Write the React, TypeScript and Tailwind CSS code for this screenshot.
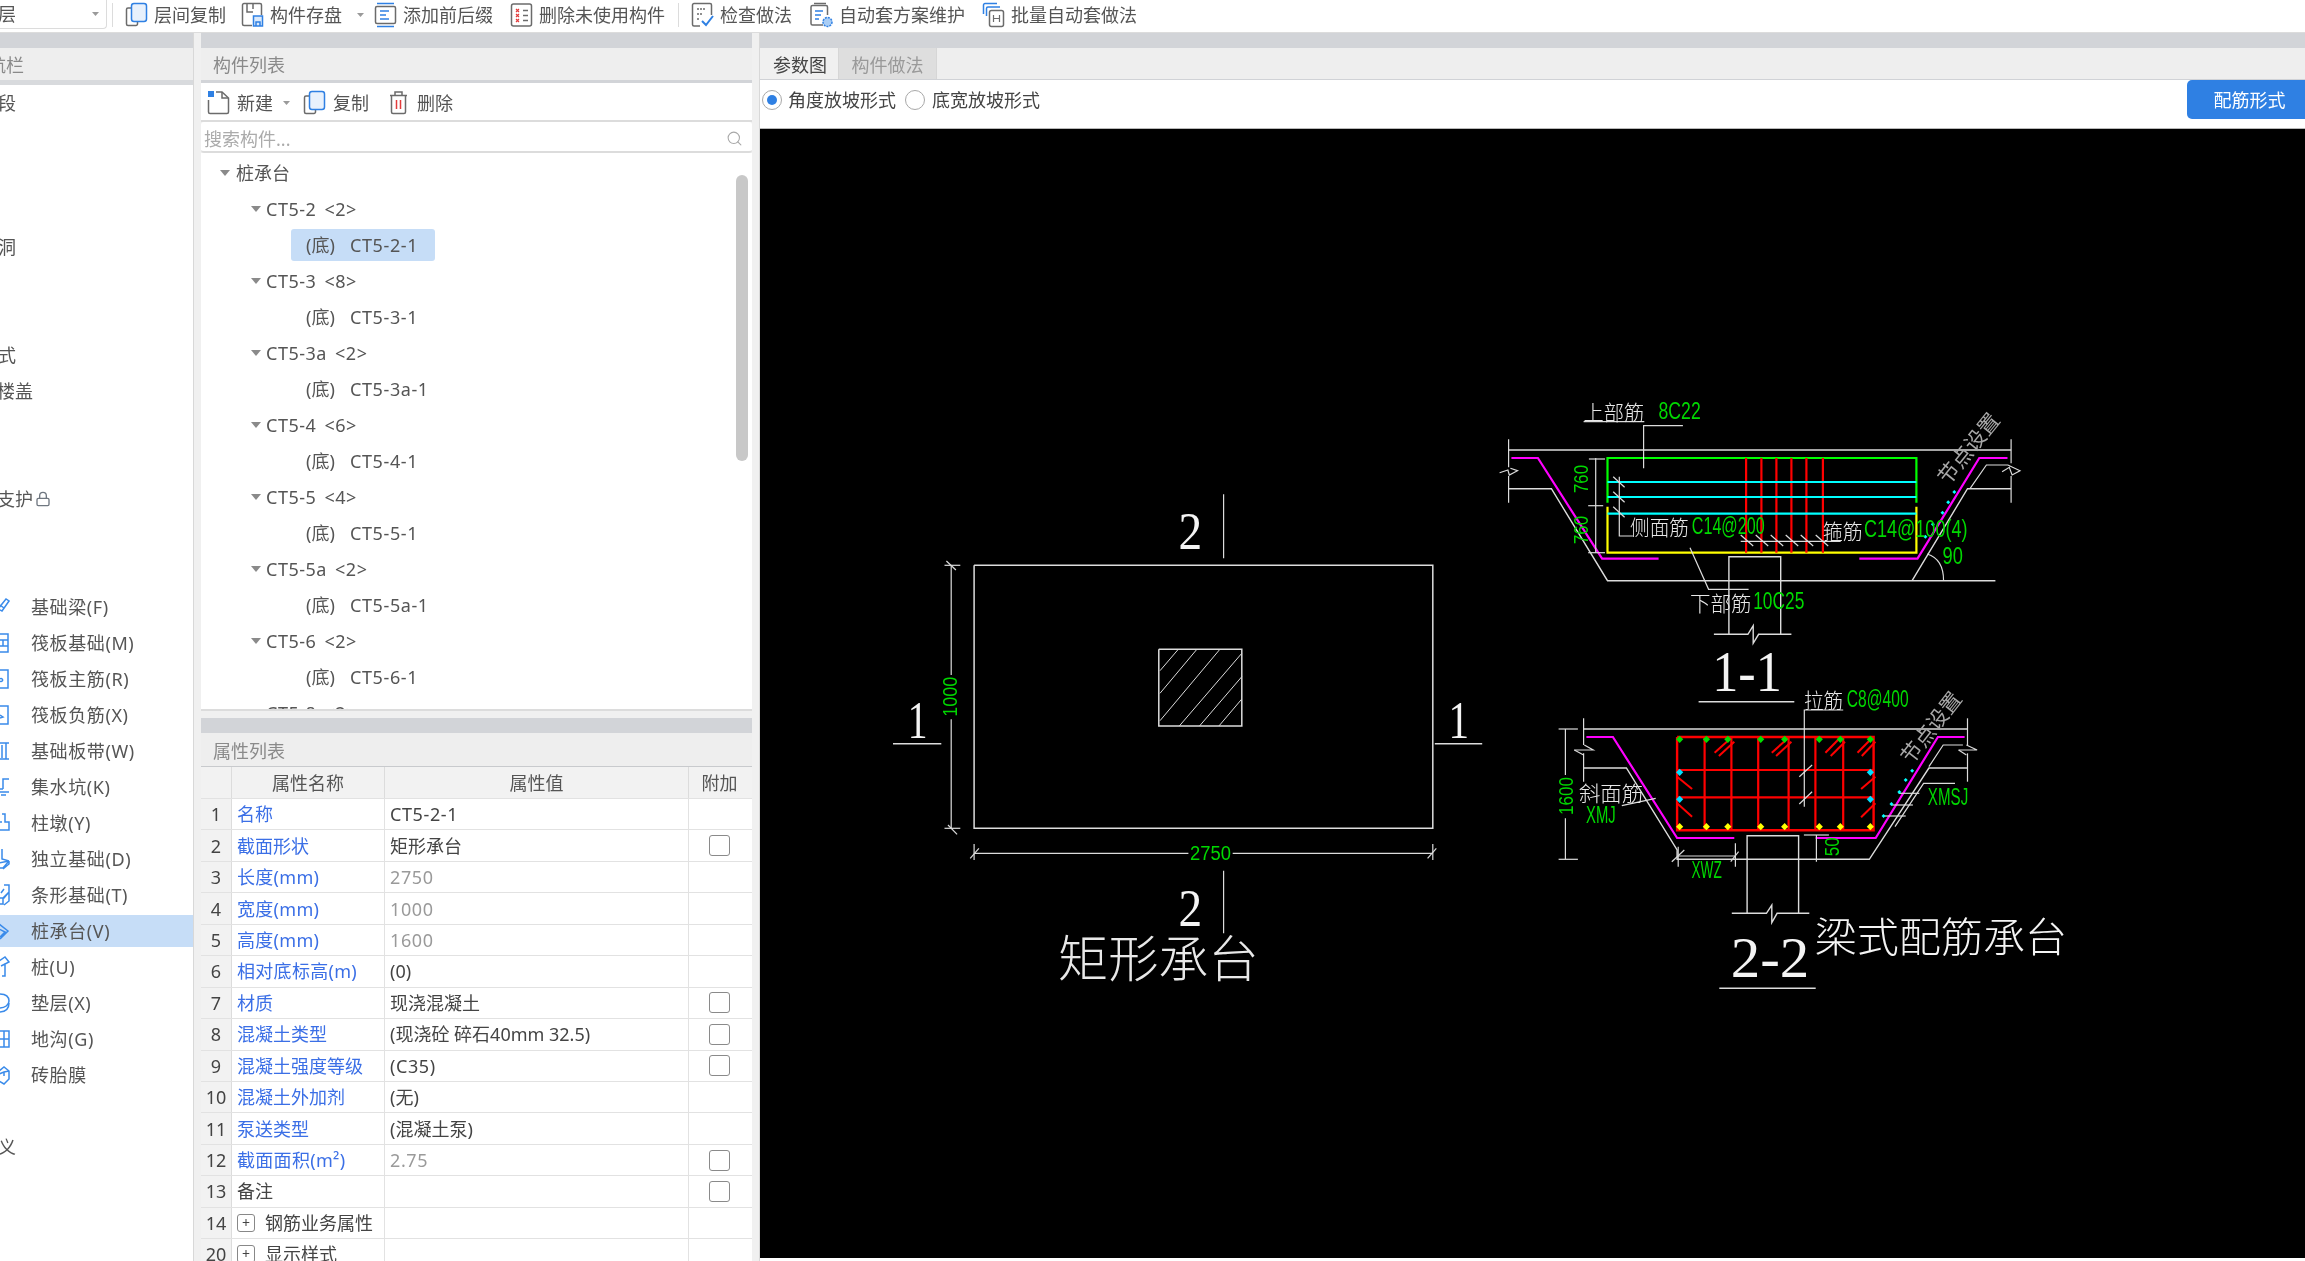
import React from "react";
import { Lock, Search } from "lucide-react";

const BLUE = "#2f80e3";
const GRAY = "#6b6b6b";

type M = (x: number, y: number) => number[];
const z5: M = (x, y) => [1480 + x / 2.8, 380 + y / 3];
const z6: M = (x, y) => [1520 + x / 2.8, 670 + y / 3];
const z7: M = (x, y) => [880 + x / 2.529, 480 + y / 3];

function P({ m, d, c = "#dcdcdc", w = 1.2 }: { m: M; d: number[]; c?: string; w?: number }) {
  const pts: string[] = [];
  for (let i = 0; i < d.length; i += 2) {
    const [x, y] = m(d[i], d[i + 1]);
    pts.push(x.toFixed(1) + "," + y.toFixed(1));
  }
  return <polyline points={pts.join(" ")} fill="none" stroke={c} strokeWidth={w} />;
}

const CADGREEN = "#00d800";
function Lbl({ m, x, x2, y, t, c = CADGREEN, s = 23, f = "'Liberation Sans'", fw = 400 }: { m: M; x: number; x2: number; y: number; t: string; c?: string; s?: number; f?: string; fw?: number }) {
  const [a, b] = m(x, y);
  const [a2] = m(x2, y);
  return (
    <text x={a} y={b} fontSize={s} fill={c} fontFamily={f} fontWeight={fw} textLength={a2 - a} lengthAdjust="spacingAndGlyphs">
      {t}
    </text>
  );
}
function Rot({ m, x, y, t, len, r = -90, c = CADGREEN, s = 21, f = "'Liberation Sans'" }: { m: M; x: number; y: number; t: string; len: number; r?: number; c?: string; s?: number; f?: string }) {
  const [a, b] = m(x, y);
  return (
    <text transform={`translate(${a} ${b}) rotate(${r})`} textAnchor="middle" dominantBaseline="central" fontSize={s} fill={c} fontFamily={f} textLength={len} lengthAdjust="spacingAndGlyphs">
      {t}
    </text>
  );
}
function Dia({ m, x, y, c, r = 3.6 }: { m: M; x: number; y: number; c: string; r?: number }) {
  const [a, b] = m(x, y);
  return <polygon points={`${a},${b - r} ${a + r},${b} ${a},${b + r} ${a - r},${b}`} fill={c} />;
}
const CJK = "'Noto Sans CJK SC'";
const SERIF = "'Liberation Serif'";

function Plan() {
  const hatch = [
    [708, 572, 753, 510],
    [708, 640, 800, 510],
    [708, 722, 858, 510],
    [757, 738, 915, 520],
    [808, 738, 915, 590],
    [857, 738, 915, 657],
  ];
  return (
    <g>
      <P m={z7} d={[238, 256, 1398, 256, 1398, 1045, 238, 1045, 238, 256]} w={1.5} />
      <P m={z7} d={[705, 508, 915, 508, 915, 738, 705, 738, 705, 508]} w={1.5} />
      {hatch.map((h, i) => (
        <P key={i} m={z7} d={h} w={1} />
      ))}
      <P m={z7} d={[869, 43, 869, 235]} />
      <P m={z7} d={[869, 1172, 869, 1360]} />
      <P m={z7} d={[33, 791, 155, 791]} w={1.5} />
      <P m={z7} d={[1403, 791, 1523, 791]} w={1.5} />
      <P m={z7} d={[180, 256, 180, 585]} />
      <P m={z7} d={[180, 718, 180, 1045]} />
      <P m={z7} d={[163, 256, 203, 256]} />
      <P m={z7} d={[163, 1045, 203, 1045]} />
      <P m={z7} d={[168, 243, 192, 270]} />
      <P m={z7} d={[172, 1035, 195, 1063]} />
      <P m={z7} d={[238, 1120, 780, 1120]} />
      <P m={z7} d={[892, 1120, 1398, 1120]} />
      <P m={z7} d={[238, 1092, 238, 1140]} />
      <P m={z7} d={[1398, 1092, 1398, 1140]} />
      <P m={z7} d={[228, 1135, 250, 1105]} />
      <P m={z7} d={[1385, 1135, 1407, 1105]} />
      <Rot m={z7} x={178} y={650} t="1000" len={40} s={20} />
      <Rot m={z7} x={836} y={1120} t="2750" len={41} r={0} s={20} />
      <Lbl m={z7} x={755} x2={815} y={207} t="2" c="#f4f4f4" s={52} f={SERIF} />
      <Lbl m={z7} x={755} x2={815} y={1337} t="2" c="#f4f4f4" s={52} f={SERIF} />
      <Lbl m={z7} x={70} x2={120} y={775} t="1" c="#f4f4f4" s={52} f={SERIF} />
      <Lbl m={z7} x={1438} x2={1490} y={775} t="1" c="#f4f4f4" s={52} f={SERIF} />
      <Lbl m={z7} x={450} x2={958} y={1490} t="矩形承台" c="#e8e8e8" s={50} f={CJK} fw={300} />
    </g>
  );
}

function Sec1() {
  const reds = [745, 788, 830, 872, 914, 960];
  return (
    <g>
      <P m={z5} d={[80, 210, 1487, 210]} w={1.4} />
      <P m={z5} d={[80, 178, 80, 262]} />
      <P m={z5} d={[80, 288, 80, 368]} />
      <P m={z5} d={[55, 278, 78, 270, 82, 285, 105, 272, 85, 265]} />
      <P m={z5} d={[1487, 178, 1487, 250]} />
      <P m={z5} d={[1487, 288, 1487, 368]} />
      <P m={z5} d={[1462, 275, 1482, 262, 1490, 285, 1512, 272, 1478, 255, 1418, 255, 1372, 326]} />
      <P m={z5} d={[80, 326, 200, 326, 357, 602, 1443, 602]} w={1.4} />
      <P m={z5} d={[1210, 602, 1365, 326, 1487, 326]} w={1.4} />
      <P m={z5} d={[88, 234, 162, 234, 342, 536, 500, 536]} c="#ff00ff" w={2.2} />
      <P m={z5} d={[1062, 536, 1225, 536, 1398, 234, 1477, 234]} c="#ff00ff" w={2.2} />
      <P m={z5} d={[357, 368, 357, 234, 1222, 234, 1222, 368]} c="#00ff00" w={2.2} />
      <P m={z5} d={[357, 380, 357, 518, 1222, 518, 1222, 380]} c="#ffff00" w={2.2} />
      {reds.map((x) => (
        <P key={x} m={z5} d={[x, 234, x, 518]} c="#ff0000" w={2.2} />
      ))}
      {[306, 351, 401].map((y) => (
        <P key={y} m={z5} d={[357, y, 1222, y]} c="#00ffff" w={2.2} />
      ))}
      <P m={z5} d={[324, 234, 324, 518]} />
      <P m={z5} d={[305, 237, 350, 237]} />
      <P m={z5} d={[303, 377, 345, 377]} />
      <P m={z5} d={[303, 518, 350, 518]} />
      <P m={z5} d={[290, 125, 460, 125]} />
      <P m={z5} d={[568, 137, 458, 137, 458, 265]} />
      <P m={z5} d={[390, 290, 390, 468, 428, 468]} />
      {[290, 335, 380].map((y) => (
        <P key={y} m={z5} d={[373, y, 405, y + 32]} />
      ))}
      <P m={z5} d={[730, 484, 1010, 484]} />
      {[730, 772, 814, 856, 898, 940].map((x) => (
        <P key={x} m={z5} d={[x, 465, x + 35, 498]} />
      ))}
      <P m={z5} d={[588, 503, 640, 628, 752, 628]} />
      <P m={z5} d={[697, 763, 697, 530, 842, 530, 842, 763]} w={1.4} />
      <P m={z5} d={[655, 763, 750, 763, 765, 737, 765, 790, 780, 763, 872, 763]} w={1.4} />
      {(() => {
        const [a, b] = z5(1252, 522);
        const [c, d] = z5(1298, 602);
        return <path d={`M${a} ${b} Q${c} ${b + 5} ${c} ${d}`} fill="none" stroke="#dcdcdc" strokeWidth={1.2} />;
      })()}
      {[
        [1328, 336],
        [1311, 367],
        [1295, 398],
        [1268, 433],
        [1247, 470],
      ].map(([x, y]) => (
        <Dia key={x} m={z5} x={x} y={y} c="#00ffff" r={2} />
      ))}
      <Lbl m={z5} x={290} x2={460} y={120} t="上部筋" c="#e8e8e8" s={21} f={CJK} fw={300} />
      <Lbl m={z5} x={500} x2={618} y={118} t="8C22" />
      <Lbl m={z5} x={420} x2={585} y={466} t="侧面筋" c="#e8e8e8" s={21} f={CJK} fw={300} />
      <Lbl m={z5} x={593} x2={797} y={463} t="C14@200" />
      <Lbl m={z5} x={960} x2={1072} y={476} t="箍筋" c="#e8e8e8" s={21} f={CJK} fw={300} />
      <Lbl m={z5} x={1075} x2={1365} y={472} t="C14@100(4)" />
      <Lbl m={z5} x={588} x2={760} y={692} t="下部筋" c="#e8e8e8" s={21} f={CJK} fw={300} />
      <Lbl m={z5} x={765} x2={908} y={688} t="10C25" />
      <Lbl m={z5} x={1295} x2={1352} y={551} t="90" />
      <Rot m={z5} x={280} y={297} t="760" len={28} />
      <Rot m={z5} x={280} y={450} t="760" len={28} />
      <Rot m={z5} x={1365} y={203} t="节点设置" len={84} r={-51} c="#a8a8a8" s={21} f={CJK} />
      <Lbl m={z5} x={650} x2={845} y={932} t="1-1" c="#f4f4f4" s={56} f={SERIF} />
      <P m={z6} d={[500, 95, 768, 95]} w={1.5} />
    </g>
  );
}

function Sec2() {
  const tx = [447, 522, 582, 674, 741, 838, 897, 981];
  const hooks = [
    [545, 248, 590, 205],
    [557, 258, 600, 215],
    [705, 248, 750, 205],
    [717, 258, 760, 215],
    [855, 248, 895, 205],
    [870, 258, 910, 215],
    [945, 248, 985, 205],
    [957, 258, 995, 215],
    [440, 320, 482, 357],
    [440, 400, 482, 440],
    [995, 320, 955, 357],
    [995, 400, 955, 442],
  ];
  return (
    <g>
      <P m={z6} d={[178, 177, 1253, 177]} w={1.4} />
      <P m={z6} d={[178, 145, 178, 225]} />
      <P m={z6} d={[178, 250, 178, 335]} />
      <P m={z6} d={[1253, 145, 1253, 225]} />
      <P m={z6} d={[1253, 250, 1253, 335]} />
      <P m={z6} d={[152, 240, 205, 240, 180, 225]} />
      <P m={z6} d={[152, 240, 178, 255]} />
      <P m={z6} d={[1228, 240, 1280, 240, 1250, 225]} />
      <P m={z6} d={[1228, 240, 1250, 255]} />
      <P m={z6} d={[178, 294, 298, 294, 440, 540, 440, 568, 978, 568, 1145, 294, 1253, 294]} w={1.4} />
      <P m={z6} d={[1240, 225, 1185, 225, 1145, 290]} />
      <P m={z6} d={[1218, 340, 1130, 340, 1050, 470]} />
      <P m={z6} d={[186, 201, 260, 201, 440, 504, 600, 504]} c="#ff00ff" w={2.2} />
      <P m={z6} d={[828, 504, 996, 504, 1170, 201, 1245, 201]} c="#ff00ff" w={2.2} />
      <P m={z6} d={[440, 201, 990, 201, 990, 481, 440, 481, 440, 201]} c="#ff0000" w={2.4} />
      {[517, 592, 667, 752, 827, 905].map((x) => (
        <P key={x} m={z6} d={[x, 201, x, 481]} c="#ff0000" w={2.2} />
      ))}
      {[300, 382].map((y) => (
        <P key={y} m={z6} d={[440, y, 990, y]} c="#ff0000" w={2.2} />
      ))}
      {hooks.map((h, i) => (
        <P key={i} m={z6} d={h} c="#ff0000" w={2} />
      ))}
      {tx.map((x) => (
        <Dia key={x} m={z6} x={x} y={208} c="#00e000" />
      ))}
      {tx.map((x) => (
        <Dia key={x} m={z6} x={x} y={470} c="#ffff00" />
      ))}
      <Dia m={z6} x={447} y={307} c="#00e0ff" />
      <Dia m={z6} x={981} y={307} c="#00e0ff" />
      <Dia m={z6} x={447} y={388} c="#00e0ff" />
      <Dia m={z6} x={981} y={388} c="#00e0ff" />
      <P m={z6} d={[905, 120, 796, 120, 796, 410]} />
      <P m={z6} d={[782, 320, 818, 285]} />
      <P m={z6} d={[782, 402, 818, 365]} />
      <P m={z6} d={[285, 407, 380, 385]} />
      <P m={z6} d={[127, 177, 127, 315]} />
      <P m={z6} d={[127, 445, 127, 568]} />
      <P m={z6} d={[108, 177, 162, 177]} />
      <P m={z6} d={[108, 568, 162, 568]} />
      <P m={z6} d={[443, 530, 443, 590]} />
      <P m={z6} d={[603, 520, 603, 590]} />
      <P m={z6} d={[443, 558, 603, 558]} />
      <P m={z6} d={[425, 575, 460, 540]} />
      <P m={z6} d={[590, 575, 612, 545]} />
      <P m={z6} d={[830, 495, 830, 575]} />
      <P m={z6} d={[795, 495, 865, 495]} />
      <P m={z6} d={[636, 730, 636, 497, 780, 497, 780, 730]} w={1.4} />
      <P m={z6} d={[593, 730, 690, 730, 705, 705, 705, 758, 720, 730, 810, 730]} w={1.4} />
      {[
        [1060, 370, 1118, 370],
        [1040, 405, 1100, 405],
        [1020, 438, 1080, 438],
      ].map((h, i) => (
        <P key={i} m={z6} d={h} />
      ))}
      {[
        [1098, 302],
        [1080, 330],
        [1062, 366],
        [1040, 402],
        [1018, 438],
      ].map(([x, y]) => (
        <Dia key={x} m={z6} x={x} y={y} c="#00ffff" r={2} />
      ))}
      <Lbl m={z6} x={795} x2={905} y={114} t="拉筋" c="#e8e8e8" s={21} f={CJK} fw={300} />
      <Lbl m={z6} x={915} x2={1088} y={112} t="C8@400" />
      <Lbl m={z6} x={165} x2={345} y={394} t="斜面筋" c="#e8e8e8" s={21} f={CJK} fw={300} />
      <Lbl m={z6} x={185} x2={268} y={458} t="XMJ" />
      <Lbl m={z6} x={1142} x2={1255} y={405} t="XMSJ" />
      <Lbl m={z6} x={480} x2={565} y={625} t="XWZ" />
      <Rot m={z6} x={127} y={378} t="1600" len={38} />
      <Rot m={z6} x={873} y={530} t="50" len={19} />
      <Rot m={z6} x={1148} y={170} t="节点设置" len={84} r={-52} c="#a8a8a8" s={21} f={CJK} />
      <Lbl m={z6} x={590} x2={810} y={922} t="2-2" c="#f4f4f4" s={56} f={SERIF} />
      <P m={z6} d={[558, 955, 828, 955]} w={1.5} />
      <Lbl m={z6} x={825} x2={1532} y={847} t="梁式配筋承台" c="#f4f4f4" s={41} f={CJK} fw={300} />
    </g>
  );
}

/* toolbar icons */
const Ico = ({ children, w = 23 }: { children: React.ReactNode; w?: number }) => (
  <svg width={w} height={26} viewBox="0 0 23 26" fill="none" strokeWidth={1.5} className="shrink-0">
    {children}
  </svg>
);
const CopyIco = () => (
  <Ico>
    <path d="M6 6H3a1.5 1.5 0 0 0-1.5 1.5V22A1.5 1.5 0 0 0 3 23.5H11a1.5 1.5 0 0 0 1.5-1.5V20" stroke={GRAY} />
    <rect x="6.5" y="1.5" width="15" height="18" rx="2.5" stroke={BLUE} fill="#e8f1fc" />
  </Ico>
);
const SaveIco = () => (
  <Ico>
    <path d="M11 23.5H3A1.5 1.5 0 0 1 1.5 22V3A1.5 1.5 0 0 1 3 1.5H19A1.5 1.5 0 0 1 20.5 3V13" stroke={GRAY} />
    <path d="M6 2V10H12M12 2V7" stroke={GRAY} />
    <rect x="12.5" y="14" width="9" height="10" stroke={BLUE} fill="#dceafb" />
    <path d="M15 24V20H19V24" stroke={BLUE} />
  </Ico>
);
const AffixIco = () => (
  <Ico>
    <path d="M3 1.5H20M3 24.5H20" stroke={BLUE} />
    <rect x="1.5" y="4.5" width="20" height="17" rx="1.5" stroke={GRAY} />
    <path d="M6 9H15M6 13H12M6 17H15" stroke={BLUE} />
  </Ico>
);
const DelUnusedIco = () => (
  <Ico>
    <rect x="1.5" y="2" width="20" height="22" rx="2" stroke={GRAY} />
    <path d="M6 7L9 10M9 7L6 10M6 12L9 15M9 12L6 15M6 17L9 20M9 17L6 20" stroke="#e23b3b" strokeWidth={1.2} />
    <path d="M13 8.5H18M13 13.5H18M13 18.5H18" stroke={GRAY} />
  </Ico>
);
const CheckIco = () => (
  <Ico>
    <path d="M9 24H3A1.5 1.5 0 0 1 1.5 22.5V3A1.5 1.5 0 0 1 3 1.5H19A1.5 1.5 0 0 1 20.5 3V13" stroke={GRAY} />
    <path d="M6 7H15M6 12H12M6 17H9" stroke={GRAY} strokeDasharray="2 1" />
    <path d="M11 19L15 23L22 14" stroke={BLUE} strokeWidth={2} />
  </Ico>
);
const AutoIco = () => (
  <Ico>
    <path d="M4 1.5H16" stroke={GRAY} />
    <path d="M13 23H2.5A1.5 1.5 0 0 1 1 21.5V5A1.5 1.5 0 0 1 2.5 3.5H16A1.5 1.5 0 0 1 17.5 5V13" stroke={GRAY} />
    <path d="M5 9H13M5 13H11M5 17H9" stroke={BLUE} />
    <circle cx="17.5" cy="20" r="4.5" fill="#a9cdf5" stroke={BLUE} strokeDasharray="2 1" />
  </Ico>
);
const BatchIco = () => (
  <Ico>
    <path d="M1.5 12V3A1.5 1.5 0 0 1 3 1.5H15" stroke={BLUE} />
    <path d="M4.5 14V6.5A1.5 1.5 0 0 1 6 5H18" stroke={BLUE} />
    <rect x="7.5" y="8.5" width="14" height="16" rx="2" stroke={GRAY} />
    <path d="M11.5 13V20M17.5 13V20M11.5 16.5H17.5" stroke={GRAY} strokeWidth={1.2} />
  </Ico>
);
const Caret = ({ c = "#8a8a8a" }: { c?: string }) => (
  <svg width="10" height="6" viewBox="0 0 10 6" className="shrink-0">
    <path d="M0 0H10L5 6Z" fill={c} />
  </svg>
);
const SmallCaret = () => (
  <svg width="7" height="4" viewBox="0 0 7 4" className="shrink-0">
    <path d="M0 0H7L3.5 4Z" fill="#9a9a9a" />
  </svg>
);

function Tool({ icon, t, cls = "", caret = false }: { icon: React.ReactNode; t: string; cls?: string; caret?: boolean }) {
  return (
    <div className={"flex items-center gap-[6px] " + cls}>
      {icon}
      <span>{t}</span>
      {caret && (
        <span className="ml-[9px]">
          <SmallCaret />
        </span>
      )}
    </div>
  );
}

/* sidebar */
const sideIcons: Record<string, string> = {
  beam: "M-2 13L6 3L9 5L2 15ZM0 9L4 12",
  raft: "M0 2H8V20H0M0 8H8M0 14H8M3 8V14",
  main: "M0 2H8V20H0M0 11A1.5 1.5 0 1 1 0 13",
  neg: "M0 2H8V20H0M0 11L3 13L0 14",
  band: "M0 3H9M0 19H9M6 3V19M2 5V18",
  pit: "M3 13V3H9M0 13H3M0 16H9M1 19H6",
  pier: "M2 2H5V10H9V18H0M-1 10H2",
  ind: "M2 1V11L9 13M9 13L3 20H-1M-1 15L9 13M9 13V16L3 21",
  strip: "M4 1H9V8L3 14V20H-1M9 8V17L4 21M-1 14L4 14L9 8M4 5L1 9",
  cap: "M-1 4L8 11L0 19M-1 9L5 12L0 17",
  pile: "M-1 5L5 1L9 6L5 8V20H2M5 8L1 10",
  pad: "M-1 2C6 2 9 5 9 9C9 13 5 16 -1 16M-1 20C6 20 9 17 9 11",
  ditch: "M0 3H9V19H0M0 11H9M4 3V19",
  brick: "M-1 7L4 3L9 7V15L4 20L-1 17M-1 10L4 8L9 7M4 8V12",
};
function SideIcon({ k }: { k: string }) {
  return (
    <svg width="10" height="22" viewBox="0 0 10 22" fill="none" stroke="#3a8bea" strokeWidth="1.5" className="absolute left-0 top-[7px]">
      <path d={sideIcons[k]} />
    </svg>
  );
}
const sideTop: { t: string; cls?: string; lock?: boolean }[] = [
  { t: "段", cls: "-ml-[2px]" },
  { t: "" },
  { t: "" },
  { t: "" },
  { t: "洞", cls: "-ml-[2px]" },
  { t: "" },
  { t: "" },
  { t: "式", cls: "-ml-[2px]" },
  { t: "楼盖", cls: "-ml-[3px]" },
  { t: "" },
  { t: "" },
  { t: "支护", cls: "-ml-[3px]", lock: true },
  { t: "" },
  { t: "" },
];
const sideItems = [
  ["基础梁(F)", "beam"],
  ["筏板基础(M)", "raft"],
  ["筏板主筋(R)", "main"],
  ["筏板负筋(X)", "neg"],
  ["基础板带(W)", "band"],
  ["集水坑(K)", "pit"],
  ["柱墩(Y)", "pier"],
  ["独立基础(D)", "ind"],
  ["条形基础(T)", "strip"],
  ["桩承台(V)", "cap"],
  ["桩(U)", "pile"],
  ["垫层(X)", "pad"],
  ["地沟(G)", "ditch"],
  ["砖胎膜", "brick"],
];

function Sidebar() {
  return (
    <aside className="w-[194px] shrink-0 bg-white overflow-hidden border-r border-[#d8d8d8]">
      <div className="h-[15px] bg-[#d2d4d8]" />
      <div className="h-[32px] bg-[#eeeeee] flex items-center pt-[2px] text-[#8a8a8a] overflow-hidden">
        <span className="-ml-[12px]">航栏</span>
      </div>
      <div className="h-[5px] bg-[#d8dadd]" />
      {sideTop.map((r, i) => (
        <div key={i} className="h-[36px] flex items-center text-[#555] whitespace-nowrap">
          <span className={r.cls}>{r.t}</span>
          {r.lock && <Lock size={16} className="ml-[2px] text-[#6f7780]" />}
        </div>
      ))}
      {sideItems.map(([t, k]) => {
        const sel = k === "cap";
        return (
          <div key={k} className="h-[36px] relative">
            <div className={"absolute inset-x-0 top-[2px] h-[32px] flex items-center pl-[31px] tracking-[0.6px] text-[#555] " + (sel ? "bg-[#c6ddf7]" : "")}>{t}</div>
            <SideIcon k={k} />
          </div>
        );
      })}
      <div className="h-[36px]" />
      <div className="h-[36px] flex items-center text-[#555]">
        <span className="-ml-[2px]">义</span>
      </div>
    </aside>
  );
}

/* tree */
const tree: [string, string][] = [
  ["CT5-2 <2>", "CT5-2-1"],
  ["CT5-3 <8>", "CT5-3-1"],
  ["CT5-3a <2>", "CT5-3a-1"],
  ["CT5-4 <6>", "CT5-4-1"],
  ["CT5-5 <4>", "CT5-5-1"],
  ["CT5-5a <2>", "CT5-5a-1"],
  ["CT5-6 <2>", "CT5-6-1"],
];
function TreeGroup({ g, c, sel }: { g: string; c: string; sel: boolean }) {
  return (
    <>
      <div className="h-[36px] flex items-center pl-[50px] gap-[5px]">
        <Caret />
        <span className="tracking-[0.5px] [word-spacing:3px]">{g}</span>
      </div>
      <div className="h-[36px] pl-[90px] flex items-center">
        <div className={"h-[32px] w-[144px] pl-[15px] flex items-center rounded-[3px] " + (sel ? "bg-[#c6ddf7]" : "")}>
          <span className="w-[44px]">(底)</span>
          <span className="tracking-[0.6px]">{c}</span>
        </div>
      </div>
    </>
  );
}

function ComponentList() {
  return (
    <section className="h-[678px] flex flex-col">
      <div className="h-[15px] bg-[#d2d4d8]" />
      <div className="h-[32px] bg-[#eeeeee] flex items-center pt-[2px] pl-[12px] text-[#8a8a8a]">构件列表</div>
      <div className="h-[3px] bg-[#d2d4d8]" />
      <div className="h-[39px] bg-white flex items-center pl-[6px] pt-[3px] border-b-2 border-[#dcdcdc]">
        <Ico>
          <path d="M9 2H15L21.5 8V22A1.5 1.5 0 0 1 20 23.5H3A1.5 1.5 0 0 1 1.5 22V10" stroke={GRAY} />
          <path d="M15 2V8H21" stroke={GRAY} />
          <rect x="1" y="1" width="6" height="6" fill={BLUE} />
        </Ico>
        <span className="ml-[7px]">新建</span>
        <span className="ml-[10px]">
          <SmallCaret />
        </span>
        <span className="ml-[13px]">
          <CopyIco />
        </span>
        <span className="ml-[7px]">复制</span>
        <span className="ml-[18px]">
          <Ico>
            <path d="M3 5.5H20M8 5V2H15V5" stroke={GRAY} />
            <path d="M4.5 6V22A1.5 1.5 0 0 0 6 23.5H17A1.5 1.5 0 0 0 18.5 22V6" stroke={GRAY} />
            <path d="M9.5 10V19M13.5 10V19" stroke="#e23b3b" />
          </Ico>
        </span>
        <span className="ml-[7px]">删除</span>
      </div>
      <div className="h-[31px] bg-white flex items-center pl-[3px] pr-[9px] pt-[4px] border-b-2 border-[#dcdcdc] rounded-[3px] text-[#ababab] justify-between">
        <span>搜索构件...</span>
        <Search size={17} strokeWidth={1.5} className="text-[#a8a8a8]" />
      </div>
      <div className="relative flex-1 bg-white overflow-hidden text-[#555] border-b-2 border-[#dcdcdc] pt-[2px]">
        <div className="h-[36px] flex items-center pl-[19px] gap-[6px]">
          <Caret />
          <span>桩承台</span>
        </div>
        {tree.map(([g, c], i) => (
          <TreeGroup key={g} g={g} c={c} sel={i === 0} />
        ))}
        <div className="h-[36px] flex items-center pl-[65px] tracking-[0.5px] [word-spacing:3px]">CT5-8 &lt;2&gt;</div>
        <div className="absolute right-[4px] top-[22px] w-[12px] h-[286px] rounded-full bg-[#c8c8c8]" />
      </div>
    </section>
  );
}

/* properties */
const props: { n: string; v?: string; b?: boolean; g?: boolean; c?: boolean; plus?: boolean; num: number; vt?: boolean; nt?: boolean }[] = [
  { num: 1, n: "名称", v: "CT5-2-1", b: true, vt: true },
  { num: 2, n: "截面形状", v: "矩形承台", b: true, c: true },
  { num: 3, n: "长度(mm)", v: "2750", b: true, g: true, nt: true, vt: true },
  { num: 4, n: "宽度(mm)", v: "1000", b: true, g: true, nt: true, vt: true },
  { num: 5, n: "高度(mm)", v: "1600", b: true, g: true, nt: true, vt: true },
  { num: 6, n: "相对底标高(m)", v: "(0)", b: true, nt: true },
  { num: 7, n: "材质", v: "现浇混凝土", b: true, c: true },
  { num: 8, n: "混凝土类型", v: "(现浇砼 碎石40mm 32.5)", b: true, c: true },
  { num: 9, n: "混凝土强度等级", v: "(C35)", b: true, c: true, vt: true },
  { num: 10, n: "混凝土外加剂", v: "(无)", b: true },
  { num: 11, n: "泵送类型", v: "(混凝土泵)", b: true },
  { num: 12, n: "截面面积(m²)", v: "2.75", b: true, g: true, c: true, nt: true, vt: true },
  { num: 13, n: "备注", c: true },
  { num: 14, n: "钢筋业务属性", plus: true },
  { num: 20, n: "显示样式", plus: true },
];
const rowCls = "grid grid-cols-[31px_153px_304px_61px] h-[31.45px] border-b-[1.5px] border-[#e2e2e2]";
function PropTable() {
  return (
    <section className="flex-1 flex flex-col overflow-hidden mt-[7px]">
      <div className="h-[15px] shrink-0 bg-[#d2d4d8]" />
      <div className="h-[33px] shrink-0 bg-[#eeeeee] flex items-center pt-[2px] pl-[12px] text-[#8a8a8a]">属性列表</div>
      <div className="h-[1px] shrink-0 bg-[#c8cacd]" />
      <div className="bg-white flex-1">
        <div className={rowCls + " bg-[#f2f2f2] h-[32px] text-[#555]"}>
          <div className="border-r-[1.5px] border-[#dcdcdc]" />
          <div className="border-r-[1.5px] border-[#dcdcdc] flex items-center justify-center">属性名称</div>
          <div className="border-r-[1.5px] border-[#dcdcdc] flex items-center justify-center">属性值</div>
          <div className="flex items-center justify-center">附加</div>
        </div>
        {props.map((r) => (
          <div key={r.num} className={rowCls}>
            <div className="bg-[#f2f2f2] border-r-[1.5px] border-[#dcdcdc] flex items-center justify-center text-[#444]">{r.num}</div>
            <div className={"border-r-[1.5px] border-[#e2e2e2] flex items-center pl-[5px] whitespace-nowrap " + (r.b ? "text-[#3b6fe6] " : "text-[#444] ") + (r.nt ? "tracking-[0.3px]" : "")}>
              {r.plus && (
                <span className="w-[18px] h-[18px] mr-[10px] border border-[#888] rounded-[3px] flex items-center justify-center text-[14px] text-[#444]">+</span>
              )}
              {r.n}
            </div>
            <div className={"border-r-[1.5px] border-[#e2e2e2] flex items-center pl-[5px] whitespace-nowrap " + (r.g ? "text-[#9a9a9a] " : "text-[#444] ") + (r.vt ? "tracking-[0.6px]" : "")}>{r.v}</div>
            <div className="flex items-center justify-center">
              {r.c && <span className="w-[21px] h-[21px] border-[1.5px] border-[#8a8a8a] rounded-[3px] bg-white" />}
            </div>
          </div>
        ))}
      </div>
    </section>
  );
}

export default function App() {
  return (
    <div className="w-[2305px] h-[1261px] overflow-hidden bg-[#f0f0f0] flex flex-col text-[18px] leading-none blur-[0.4px] font-['Noto_Sans','Noto_Sans_CJK_SC',sans-serif] text-[#555]">
      <header className="h-[33px] shrink-0 bg-white flex items-center pb-[2px] border-b border-[#dcdcdc] whitespace-nowrap">
        <div className="w-[107px] h-[29px] -mt-[2px] flex items-center justify-between pr-[7px] border-r border-b border-[#dcdcdc] rounded-br-[4px]">
          <span className="-ml-[2px]">层</span>
          <SmallCaret />
        </div>
        <div className="w-[1px] h-[24px] ml-[5px] bg-[#dcdcdc]" />
        <Tool icon={<CopyIco />} t="层间复制" cls="ml-[12px]" />
        <Tool icon={<SaveIco />} t="构件存盘" cls="ml-[15px]" caret />
        <Tool icon={<AffixIco />} t="添加前后缀" cls="ml-[10px]" />
        <Tool icon={<DelUnusedIco />} t="删除未使用构件" cls="ml-[17px]" />
        <div className="w-[1px] h-[24px] ml-[13px] bg-[#dcdcdc]" />
        <Tool icon={<CheckIco />} t="检查做法" cls="ml-[12px]" />
        <Tool icon={<AutoIco />} t="自动套方案维护" cls="ml-[18px]" />
        <Tool icon={<BatchIco />} t="批量自动套做法" cls="ml-[17px]" />
      </header>
      <main className="flex-1 flex min-h-0">
        <Sidebar />
        <div className="w-[551px] ml-[7px] shrink-0 flex flex-col">
          <ComponentList />
          <PropTable />
        </div>
        <div className="flex-1 ml-[7px] flex flex-col min-w-0 border-l border-[#d8d8d8]">
          <div className="h-[15px] shrink-0 bg-[#d2d4d8]" />
          <div className="h-[32px] shrink-0 bg-[#eeeeee] flex border-b border-[#d0d2d6]">
            <div className="w-[79px] bg-[#f0f0f0] flex items-center justify-center pt-[2px] pl-[2px] text-[#444] border-r border-[#d6d6d6]">参数图</div>
            <div className="w-[98px] bg-[#dedede] flex items-center justify-center pt-[2px] text-[#999] border-r border-[#d6d6d6]">构件做法</div>
          </div>
          <div className="h-[49px] shrink-0 bg-white flex items-center pb-[9px] border-b border-[#b8b8b8] text-[#444]">
            <span className="ml-[2px] w-[20px] h-[20px] rounded-full border-[1.5px] border-[#a8a8a8] flex items-center justify-center">
              <span className="w-[10px] h-[10px] rounded-full bg-[#2f80e3]" />
            </span>
            <span className="ml-[6px]">角度放坡形式</span>
            <span className="ml-[9px] w-[20px] h-[20px] rounded-full border-[1.5px] border-[#a8a8a8]" />
            <span className="ml-[7px]">底宽放坡形式</span>
            <button className="ml-auto w-[118px] h-[39px] rounded-l-[5px] bg-[#2f80e3] text-white text-[18px] pl-[7px]">配筋形式</button>
          </div>
          <div className="flex-1 min-h-0 bg-white pb-[3px]">
            <svg viewBox="760 129 1545 1129" className="block w-full h-full bg-black" preserveAspectRatio="xMinYMin slice">
              <Plan />
              <Sec1 />
              <Sec2 />
            </svg>
          </div>
        </div>
      </main>
    </div>
  );
}
